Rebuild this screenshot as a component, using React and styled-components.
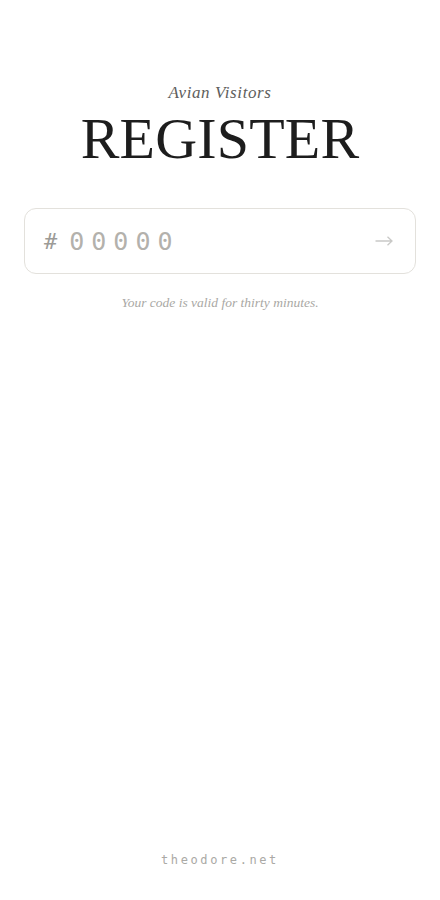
import React from 'react'
import styled, { createGlobalStyle } from 'styled-components'

const GlobalStyle = createGlobalStyle`
  html, body {
    margin: 0;
    padding: 0;
    background: #fff;
  }
  #root {
    min-height: 100vh;
  }
`

const Page = () => {
  return <Wrapper>
    <GlobalStyle />
    <Main>
      <Subtitle>Avian Visitors</Subtitle>
      <Title>REGISTER</Title>
      <CodeBox>
        <Hash>#</Hash>
        <CodeInput placeholder='00000' maxLength={5} inputMode='numeric' />
        <Submit aria-label='submit'>
          <svg width='18' height='10' viewBox='0 0 18 10' fill='none'>
            <path d='M0.5 5H17M12.5 0.7L17 5L12.5 9.3' stroke='#c9c9c7' strokeWidth='1.3' />
          </svg>
        </Submit>
      </CodeBox>
      <Note>Your code is valid for thirty minutes.</Note>
    </Main>
    <Footer>theodore.net</Footer>
  </Wrapper>
}

const Wrapper = styled.div`
  height: 900px;
  display: flex;
  flex-direction: column;
  align-items: center;
  box-sizing: border-box;
  padding: 82px 24px 0;
`

const Main = styled.main`
  width: 100%;
  flex: 1;
  display: flex;
  flex-direction: column;
  align-items: center;
`

const Subtitle = styled.h2`
  margin: 0;
  font-family: 'Liberation Serif', serif;
  font-style: italic;
  font-weight: 400;
  font-size: 17px;
  line-height: 22px;
  letter-spacing: 0.6px;
  color: #5e5e5c;
`

const Title = styled.h1`
  margin: 2px 0 0;
  font-family: 'Liberation Serif', serif;
  font-weight: 400;
  font-size: 58px;
  line-height: 66px;
  letter-spacing: 0.2px;
  color: #1d1d1d;
`

const CodeBox = styled.label`
  margin-top: 36px;
  width: 100%;
  height: 66px;
  box-sizing: border-box;
  display: flex;
  align-items: center;
  padding: 0 22px 0 19px;
  border: 1px solid #e3e1dc;
  border-radius: 12px;
`

const Hash = styled.span`
  font-family: 'DejaVu Sans Mono', monospace;
  font-size: 22px;
  color: #9c9b97;
  margin-right: 12px;
`

const CodeInput = styled.input`
  flex: 1;
  min-width: 0;
  border: none;
  outline: none;
  background: transparent;
  padding: 0;
  font-family: 'DejaVu Sans Mono', monospace;
  font-size: 25px;
  letter-spacing: 7px;
  color: #333;
  &::placeholder {
    color: #b3b1ac;
  }
`

const Submit = styled.button`
  border: none;
  background: none;
  padding: 0;
  display: flex;
  align-items: center;
  cursor: pointer;
`

const Note = styled.p`
  margin: 21px 0 0;
  font-family: 'Liberation Serif', serif;
  font-style: italic;
  font-size: 13.5px;
  color: #a9a8a4;
`

const Footer = styled.footer`
  padding-bottom: 33px;
  font-family: 'DejaVu Sans Mono', monospace;
  font-size: 12px;
  letter-spacing: 2.6px;
  color: #aaa9a5;
`

export default Page
